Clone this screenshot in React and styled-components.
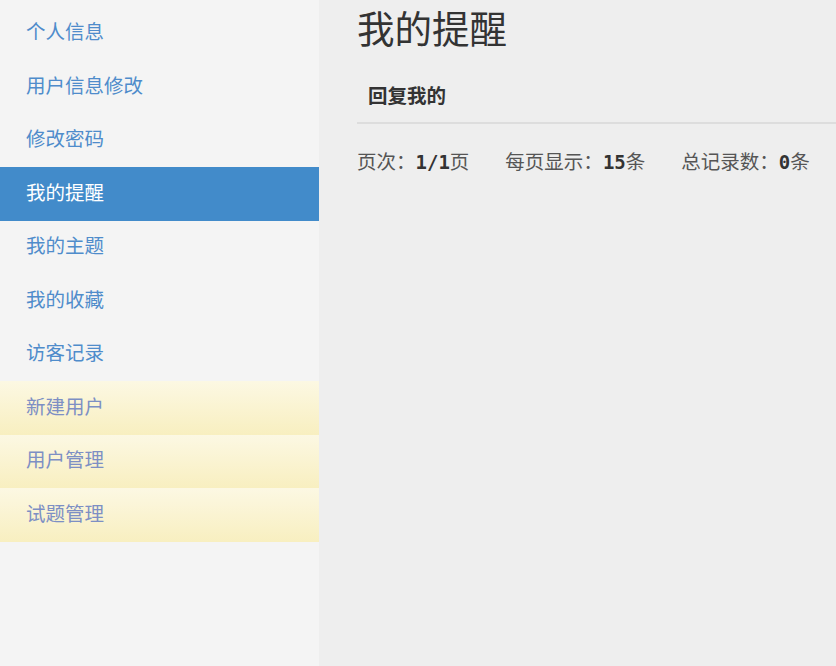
import styled, { createGlobalStyle, css } from "styled-components";

const GlobalStyle = createGlobalStyle`
  html, body {
    margin: 0;
    padding: 0;
    background-color: #eeeeee;
  }
  body {
    font-family: "Noto Sans CJK SC", "Noto Sans", sans-serif;
  }
`;

const Page = styled.div`
  display: flex;
  flex-direction: row;
  height: 100vh;
  overflow: hidden;
`;

const Sidebar = styled.div`
  width: 319px;
  flex-shrink: 0;
  background-color: #f4f4f4;
  padding-top: 6.5px;
  box-sizing: border-box;
  display: flex;
  flex-direction: column;
`;

const NavItem = styled.div`
  height: 53.5px;
  box-sizing: border-box;
  display: flex;
  align-items: center;
  padding: 0 0 5px 26px;
  font-size: 19.5px;
  color: #4f8ccb;
  cursor: pointer;

  ${(p) =>
    p.$active &&
    css`
      background-color: #428bca;
      color: #fff;
    `}

  ${(p) =>
    p.$warning &&
    css`
      background-image: linear-gradient(to bottom, #fcf8e3 0%, #f8efc0 100%);
      color: #7d8fc4;
    `}
`;

const Main = styled.div`
  flex: 1;
  padding-left: 38px;
  background-color: #eeeeee;
`;

const Title = styled.h1`
  margin: 0;
  font-size: 37.5px;
  font-weight: 400;
  color: #333;
  line-height: 54px;
`;

const Tabs = styled.div`
  display: flex;
  flex-direction: row;
  margin-top: 28px;
  border-bottom: 2px solid #dddddd;
`;

const Tab = styled.div`
  padding: 0 11px 14px 11px;
  font-size: 19.5px;
  font-weight: 700;
  color: #333;
  line-height: 26px;
`;

const Stats = styled.div`
  display: flex;
  flex-direction: row;
  gap: 36px;
  margin-top: 22px;
  font-size: 19.5px;
  color: #555;
`;

const Stat = styled.span`
  white-space: nowrap;
`;

const Num = styled.span`
  font-family: "DejaVu Sans Mono", "Liberation Mono", monospace;
  font-weight: 700;
  font-size: 19px;
  color: #333;
`;

const menu = [
  { label: "个人信息" },
  { label: "用户信息修改" },
  { label: "修改密码" },
  { label: "我的提醒", active: true },
  { label: "我的主题" },
  { label: "我的收藏" },
  { label: "访客记录" },
  { label: "新建用户", warning: true },
  { label: "用户管理", warning: true },
  { label: "试题管理", warning: true },
];

export default function App() {
  return (
    <>
      <GlobalStyle />
      <Page>
        <Sidebar>
          {menu.map((m) => (
            <NavItem key={m.label} $active={m.active} $warning={m.warning}>
              {m.label}
            </NavItem>
          ))}
        </Sidebar>
        <Main>
          <Title>我的提醒</Title>
          <Tabs>
            <Tab>回复我的</Tab>
          </Tabs>
          <Stats>
            <Stat>
              页次：<Num>1/1</Num>页
            </Stat>
            <Stat>
              每页显示：<Num>15</Num>条
            </Stat>
            <Stat>
              总记录数：<Num>0</Num>条
            </Stat>
          </Stats>
        </Main>
      </Page>
    </>
  );
}
